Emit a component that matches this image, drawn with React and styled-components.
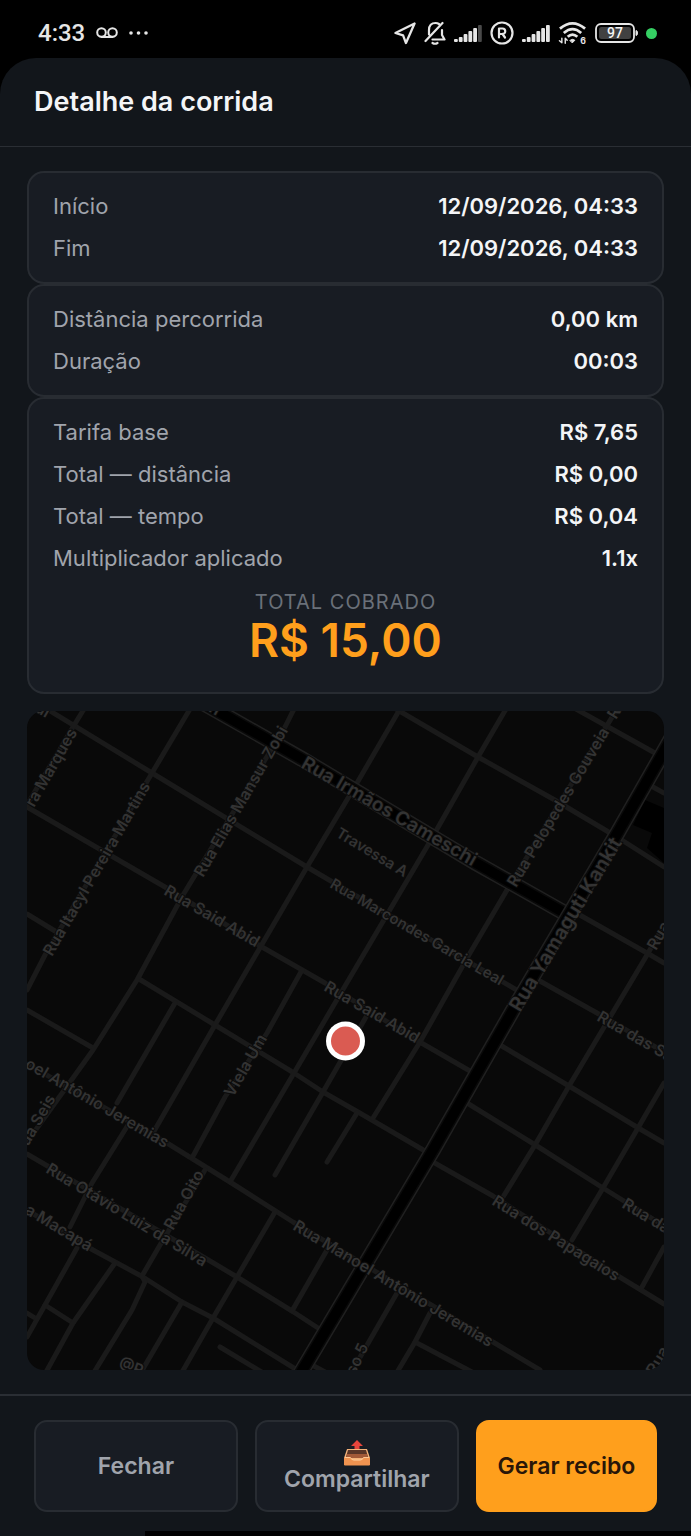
import styled, { createGlobalStyle } from "styled-components";

const trip = {
  period: [
    { label: "Início", value: "12/09/2026, 04:33" },
    { label: "Fim", value: "12/09/2026, 04:33" },
  ],
  route: [
    { label: "Distância percorrida", value: "0,00 km" },
    { label: "Duração", value: "00:03" },
  ],
  fare: [
    { label: "Tarifa base", value: "R$ 7,65" },
    { label: "Total — distância", value: "R$ 0,00" },
    { label: "Total — tempo", value: "R$ 0,04" },
    { label: "Multiplicador aplicado", value: "1.1x" },
  ],
  total: "R$ 15,00",
};

const streets = [
  "M42 706L152 773L307 867L520 992",
  "M538 980L597 1013L664 1052",
  "M27 807L165 887L262 947L325 983L418 1041L470 1071",
  "M500 1045L569 1086L640 1129L664 1143",
  "M27 914L55 931",
  "M139 979L215 1025L294 1073L323 1092L358 1112L425 1151",
  "M433 1162L493 1196L618 1276L664 1304",
  "M467 1103L537 1146L603 1188L664 1226",
  "M27 1010L93 1048",
  "M27 1064L167 1143L230 1182L293 1222L493 1342L540 1370",
  "M27 1154L205 1258L237 1277L292 1311L318 1328",
  "M27 1210L93 1250L143 1277L182 1302L213 1318L297 1370",
  "M220 1347L265 1374",
  "M27 1313L35 1318",
  "M45 1305L73 1323",
  "M312 1365L325 1372",
  "M415 1342L472 1372",
  "M396 709L478 757L553 799L617 837L664 867",
  "M576 709L655 753",
  "M653 787L664 793",
  "M578 914L647 953L664 963",
  "M84 709L73 727L27 805",
  "M190 709L152 773L45 955L27 990",
  "M294 709L285 727L183 895L137 980L93 1050L27 1142",
  "M400 709L357 783L307 867L215 1025L153 1133",
  "M175 1003L117 1103",
  "M128 1125L92 1183L70 1227M77 1248L27 1337",
  "M302 970L267 1033L225 1097L192 1158",
  "M506 709L478 757L428 845L378 930L335 1003L294 1073L230 1182",
  "M366 1017L323 1092L275 1175",
  "M357 1113L327 1162",
  "M507 890L470 953L420 1042L373 1118",
  "M617 709L507 890",
  "M664 925L647 955L569 1086L535 1145L503 1197",
  "M664 1083L638 1128L603 1188L572 1240",
  "M664 1247L642 1287",
  "M205 1170L160 1245L142 1276L145 1282L132 1310L93 1374",
  "M275 1212L237 1277L213 1318L181 1374",
  "M327 1250L292 1311",
  "M115 1263L73 1323L45 1374",
  "M182 1302L140 1374",
  "M397 1293L355 1366",
  "M430 1313L415 1342L396 1374",
];

const avenues = ["M205 704L302 759L476 863L570 916", "M672 737L618 832L513 1010L433 1150L300 1374"];

const streetNames = [
  { x: 34, y: 808, angle: -60, text: "ra Marques" },
  { x: 52, y: 957, angle: -60, text: "Rua Itacyl Pereira Martins" },
  { x: 203, y: 878, angle: -60, text: "Rua Elias Mansur Zobi" },
  { x: 300, y: 767, angle: 30, size: 19, text: "Rua Irmãos Cameschi" },
  { x: 335, y: 836, angle: 31, size: 15, text: "Travessa A" },
  { x: 329, y: 887, angle: 30, size: 15, text: "Rua Marcondes Garcia Leal" },
  { x: 516, y: 888, angle: -59, text: "Rua Pelopedes Gouveia" },
  { x: 616, y: 720, angle: -59, text: "R" },
  { x: 520, y: 1013, angle: -59, size: 20, text: "Rua Yamaguti Kankit" },
  { x: 163, y: 894, angle: 30, text: "Rua Said Abid" },
  { x: 323, y: 990, angle: 30, text: "Rua Said Abid" },
  { x: 656, y: 951, angle: -60, text: "Rua" },
  { x: 596, y: 1020, angle: 30, text: "Rua das Saíras" },
  { x: 233, y: 1098, angle: -60, text: "Viela Um" },
  { x: 24, y: 1067, angle: 30, text: "oel Antônio Jeremias" },
  { x: 28, y: 1147, angle: -60, text: "ua Seis" },
  { x: 45, y: 1172, angle: 31, text: "Rua Otávio Luiz da Silva" },
  { x: 24, y: 1213, angle: 31, text: "a Macapá" },
  { x: 173, y: 1231, angle: -61, text: "Rua Oito" },
  { x: 292, y: 1229, angle: 31, text: "Rua Manoel Antônio Jeremias" },
  { x: 491, y: 1204, angle: 32, text: "Rua dos Papagaios" },
  { x: 621, y: 1207, angle: 31, text: "Rua da Paz" },
  { x: 355, y: 1376, angle: -65, text: "so 5" },
  { x: 655, y: 1376, angle: -60, text: "Rua" },
  { x: 118, y: 1367, angle: 20, size: 15, text: "@P" },
  { x: 34, y: 711, angle: 30, text: "ui" },
  { x: 208, y: 711, angle: 30, text: "n" },
];

const stroke = {
  fill: "none",
  stroke: "#e6e6e6",
  strokeWidth: 2,
  strokeLinecap: "round",
  strokeLinejoin: "round",
};

const GlobalStyle = createGlobalStyle`
  * {
    box-sizing: border-box;
  }
  body {
    margin: 0;
    background: #000;
    font-family: Inter, "Liberation Sans", sans-serif;
  }
`;

const StatusIcons = () => (
  <StyledIcons>
    <svg width="22" height="24" viewBox="0 0 23 24" {...stroke} strokeWidth="2.400">
      <path d="M21.500 2L1.500 12L9.500 14.500L12.500 22.500Z" />
    </svg>
    <svg width="22" height="24" viewBox="0 0 22 24" {...stroke} strokeWidth="2.200">
      <path d="M5 13.500V9C5 4.500 7.500 2 11.500 2C13 2 14 2.300 15 3M18 9V14L20.500 18.500H8.500M1.500 20L18.500 2" />
      <path d="M8.500 22Q11 23.500 13.500 22" />
    </svg>
    <SignalBars level={5} />
    <svg width="24" height="24" viewBox="0 0 24 24" {...stroke} strokeWidth="2.200">
      <circle cx="12" cy="12" r="10.500" />
      <path d="M9 16.500V7.500H12.500A2.600 2.600 0 0 1 12.500 13H9M12.500 13L15 16.500" />
    </svg>
    <SignalBars level={6} />
    <svg width="29" height="24" viewBox="0 0 30 24" {...stroke} strokeWidth="2.800">
      <path d="M2 7.500Q15 -3.500 28 7.500M6 12Q15 4 24 12M10 16Q15 11.500 20 16" strokeLinecap="butt" />
      <path d="M12.500 19.500Q15 17.500 17.500 19.500L15 22Z" fill="#e6e6e6" strokeWidth="1" />
      <path d="M4 17.500V22L1.500 20M7.500 22.500V17.500L9.500 19.500" strokeWidth="1.500" />
      <text x="23" y="23" fill="#e6e6e6" stroke="none" fontSize="9" fontWeight="700">6</text>
    </svg>
    <svg width="43" height="20" viewBox="0 0 43 20">
      <rect x="1" y="1" width="38" height="18" rx="5" fill="none" stroke="#e6e6e6" strokeWidth="1.800" />
      <rect x="4" y="4" width="32" height="12" rx="2.500" fill="#414141" />
      <path d="M41 7.500Q42.500 7.500 42.500 10T41 12.500Z" fill="#e6e6e6" stroke="#e6e6e6" />
      <StyledCharge x="20" y="15">97</StyledCharge>
    </svg>
    <StyledDot />
  </StyledIcons>
);

const SignalBars = ({ level }) => (
  <svg width="28" height="20" viewBox="0 0 28 20">
    {[3, 5, 8, 11, 14, 17].map((height, i) => (
      <rect
        key={height}
        x={i * 4.8}
        y={19 - height}
        width="3.800"
        height={height}
        rx="1"
        fill={i < level ? "#e6e6e6" : "#4a4a4a"}
      />
    ))}
  </svg>
);

const OutboxIcon = () => (
  <svg width="28" height="26" viewBox="0 0 28 26" aria-hidden="true">
    <path d="M4 9H24L27 18V25H1V18Z" fill="#f3b27a" />
    <path d="M5 10H23L25 17H3Z" fill="#5a3628" />
    <path d="M4 14H24L25 18H3Z" fill="#a35a38" />
    <path d="M1 17.500H7Q8.500 20.500 11 20.500H17Q19.500 20.500 21 17.500H27V24.500Q27 25.500 26 25.500H2Q1 25.500 1 24.500Z" fill="#f09350" />
    <path d="M2 17.500H7.500Q8.500 20 11 20H17Q19.500 20 20.500 17.500H26" fill="none" stroke="#ffc894" strokeWidth="1" />
    <path d="M14 0L20 6H16.500V9H11.500V6H8Z" fill="#e8453c" />
  </svg>
);

const TripMap = () => (
  <StyledMap viewBox="27 711 637 659" role="img" aria-label="Mapa da corrida">
    <rect x="27" y="711" width="637" height="659" fill="#090909" />
    <path d="M645 800L664 808V863L647 848L652 833L633 825Z" fill="#000" />
    <g fill="none" stroke="#1a1a1a" strokeWidth="5" strokeLinecap="round" strokeLinejoin="round">
      {streets.map((d) => (
        <path key={d} d={d} />
      ))}
    </g>
    {avenues.map((d) => (
      <g key={d} fill="none">
        <path d={d} stroke="#202020" strokeWidth="16" />
        <path d={d} stroke="#090909" strokeWidth="13" />
        <path d={d} stroke="#000" strokeWidth="10" />
      </g>
    ))}
    {streetNames.map(({ x, y, angle, size = 16, text }) => (
      <StyledStreetName key={`${text}${x}`} $size={size} transform={`translate(${x} ${y}) rotate(${angle})`}>
        {text}
      </StyledStreetName>
    ))}
    <circle cx="345.500" cy="1041" r="19.500" fill="#fff" />
    <circle cx="345.500" cy="1041" r="14.500" fill="#da5b52" />
  </StyledMap>
);

const DetailRows = ({ rows }) => (
  <StyledRows>
    {rows.map(({ label, value }) => (
      <StyledRow key={label}>
        <dt>{label}</dt>
        <dd>{value}</dd>
      </StyledRow>
    ))}
  </StyledRows>
);

export default function App() {
  return (
    <StyledScreen>
      <GlobalStyle />
      <StyledStatusBar>
        <StyledClock>
          <time>4:33</time>
          <svg width="22" height="12" viewBox="0 0 22 12" {...stroke}>
            <circle cx="5.500" cy="5.500" r="4.300" />
            <circle cx="16.500" cy="5.500" r="4.300" />
            <path d="M5.500 10H16.500" />
          </svg>
          <svg width="20" height="4" viewBox="0 0 20 4" fill="#e6e6e6">
            <circle cx="2" cy="2" r="1.800" />
            <circle cx="9.500" cy="2" r="1.800" />
            <circle cx="17" cy="2" r="1.800" />
          </svg>
        </StyledClock>
        <StatusIcons />
      </StyledStatusBar>
      <StyledSheet>
        <StyledHeader>
          <StyledTitle>Detalhe da corrida</StyledTitle>
        </StyledHeader>
        <StyledContent>
          <StyledCard>
            <DetailRows rows={trip.period} />
          </StyledCard>
          <StyledCard>
            <DetailRows rows={trip.route} />
          </StyledCard>
          <StyledCard>
            <DetailRows rows={trip.fare} />
            <StyledTotal>
              <StyledTotalLabel>TOTAL COBRADO</StyledTotalLabel>
              <StyledTotalValue>{trip.total}</StyledTotalValue>
            </StyledTotal>
          </StyledCard>
          <TripMap />
        </StyledContent>
        <StyledFooter>
          <StyledButton type="button">Fechar</StyledButton>
          <StyledButton type="button">
            <OutboxIcon />
            Compartilhar
          </StyledButton>
          <StyledButton type="button" $primary>
            Gerar recibo
          </StyledButton>
        </StyledFooter>
        <StyledBottomEdge />
      </StyledSheet>
    </StyledScreen>
  );
}

const StyledScreen = styled.div`
  min-height: 100vh;
  display: flex;
  flex-direction: column;
`;

const StyledStatusBar = styled.div`
  height: 58px;
  padding: 8px 34px 0 38px;
  display: flex;
  align-items: center;
  justify-content: space-between;
`;

const StyledClock = styled.div`
  display: flex;
  align-items: center;
  gap: 11px;
  color: #e6e6e6;
  font-family: Roboto, sans-serif;
  font-size: 24px;
  font-weight: 500;
`;

const StyledIcons = styled.div`
  display: flex;
  align-items: center;
  gap: 8px;
`;

const StyledCharge = styled.text`
  fill: #f4f4f4;
  font-family: Roboto, sans-serif;
  font-size: 14px;
  font-weight: 500;
  text-anchor: middle;
`;

const StyledDot = styled.span`
  width: 11px;
  height: 11px;
  border-radius: 50%;
  background: #35cf63;
`;

const StyledSheet = styled.main`
  flex: 1;
  display: flex;
  flex-direction: column;
  background: #12161b;
  border-radius: 36px 36px 0 0;
`;

const StyledHeader = styled.header`
  padding: 26px 34px;
  border-bottom: 1px solid #2a2e34;
`;

const StyledTitle = styled.h1`
  margin: 0;
  color: #f4f5f7;
  font-size: 27px;
  font-weight: 600;
  line-height: 36px;
`;

const StyledContent = styled.div`
  flex: 1;
  padding: 24px 27px;
`;

const StyledCard = styled.section`
  padding: 12px 24px 13px;
  background: #181c23;
  border: 2px solid #282c32;
  border-radius: 17px;
`;

const StyledRows = styled.dl`
  margin: 0;
`;

const StyledRow = styled.div`
  display: flex;
  justify-content: space-between;
  font-size: 22px;
  line-height: 42px;

  dt {
    color: #a0a4ac;
  }
  dd {
    margin: 0;
    color: #f4f5f7;
    font-weight: 600;
  }
`;

const StyledTotal = styled.div`
  padding: 12px 0;
  text-align: center;
`;

const StyledTotalLabel = styled.div`
  color: #6a7079;
  font-size: 20px;
  line-height: 22px;
  letter-spacing: 1px;
`;

const StyledTotalValue = styled.div`
  color: #ff9f1c;
  font-size: 46px;
  font-weight: 600;
  line-height: 54px;
`;

const StyledMap = styled.svg`
  display: block;
  width: 100%;
  margin-top: 17px;
  border-radius: 17px;
`;

const StyledStreetName = styled.text`
  fill: #333;
  stroke: #0b0b0b;
  stroke-width: 2px;
  paint-order: stroke;
  font-size: ${({ $size }) => $size}px;
  font-weight: 600;
`;

const StyledFooter = styled.footer`
  display: grid;
  grid-template-columns: 9fr 9fr 8fr;
  gap: 17px;
  padding: 24px 34px 19px;
  border-top: 2px solid #2a2e34;
`;

const StyledButton = styled.button`
  height: 92px;
  display: flex;
  flex-direction: column;
  align-items: center;
  justify-content: center;
  padding: 0;
  border: 2px solid ${({ $primary }) => ($primary ? "#ff9f1c" : "#282c32")};
  border-radius: 13px;
  background: ${({ $primary }) => ($primary ? "#ff9f1c" : "#181c23")};
  color: ${({ $primary }) => ($primary ? "#2a1608" : "#a0a4ac")};
  font-family: inherit;
  font-size: 23px;
  font-weight: 600;
  line-height: 27px;
`;

const StyledBottomEdge = styled.div`
  height: 5px;
  margin-left: 21%;
  background: #000;
`;
